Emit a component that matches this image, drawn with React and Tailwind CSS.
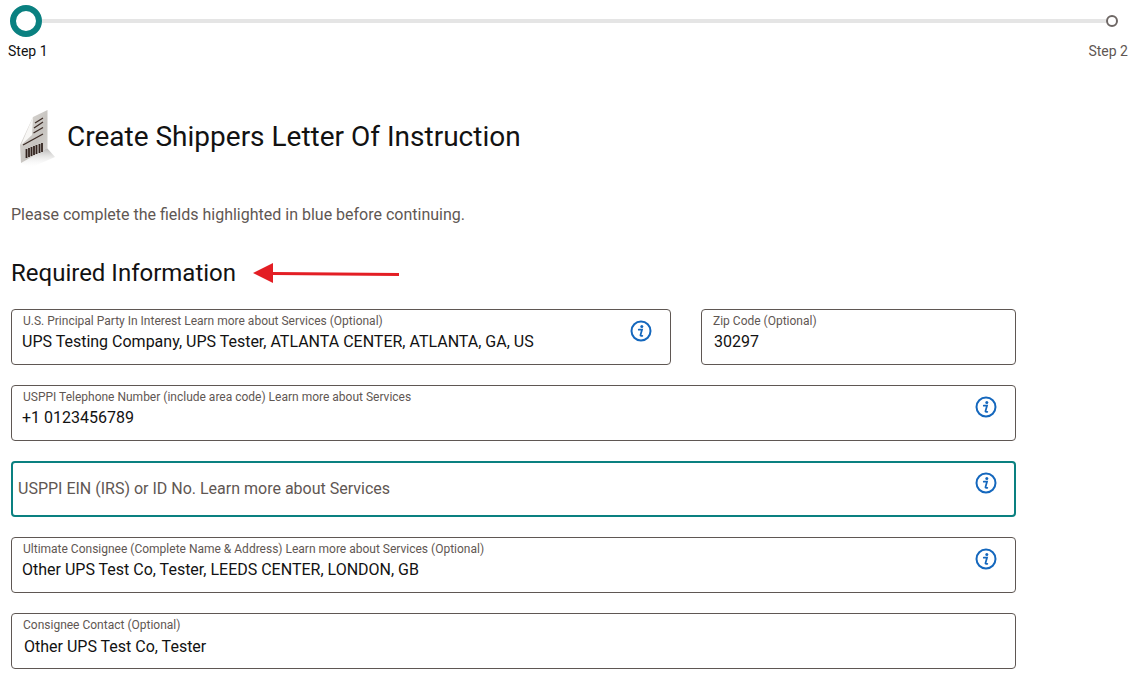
const InfoIcon = ({ className = 'right-[18px] top-[10px]' }) => (
  <svg width="22" height="22" viewBox="0 0 22 22" fill="none" className={`absolute ${className}`}>
    <circle cx="11" cy="11" r="9.5" stroke="#1467bd" strokeWidth="2" />
    <circle cx="11.800" cy="6.500" r="1.500" fill="#1467bd" />
    <path d="M8.800 9.700h3.200l-1.500 5.400c-.1.500.1.700.8.700h1" stroke="#1467bd" strokeWidth="1.800" strokeLinecap="round" />
  </svg>
);

const Field = ({ label, value, info, className = 'w-full', valueClass = 'mt-[2px] pl-[10px]' }) => (
  <div className={`relative h-14 rounded border border-[#5f5753] bg-white pt-[3px] ${className}`}>
    <div className="pl-[11px] text-xs leading-[16px] text-[#5f5753]">{label}</div>
    <div className={`text-base leading-[22px] text-[#121212] ${valueClass}`}>{value}</div>
    {info && <InfoIcon />}
  </div>
);

const DocIcon = () => (
  <svg width="40" height="64" viewBox="0 0 40 64" className="shrink-0">
    <defs>
      <linearGradient id="sheet" x1="0" y1="0" x2="1" y2="1">
        <stop offset="0" stopColor="#dfdcd8" />
        <stop offset="0.6" stopColor="#c6c3bf" />
        <stop offset="1" stopColor="#dad8d5" />
      </linearGradient>
      <linearGradient id="shade" x1="0" y1="0" x2="0" y2="1">
        <stop offset="0" stopColor="#a9a7a5" stopOpacity="0.85" />
        <stop offset="1" stopColor="#ffffff" stopOpacity="0" />
      </linearGradient>
    </defs>
    <path d="M32 40l8 9-25 11-9-5z" fill="url(#shade)" />
    <path d="M18 9L32.500 2V40L6 55 5 37z" fill="url(#sheet)" />
    <path d="M18 9l-1 18L6 37z" fill="#f8f7f5" />
    <path d="M20 15l8-5M19 20l9-6M18.500 25l9.500-5.500M8 37l20-11" stroke="#3d2c26" strokeWidth="1.300" />
    <path d="M11.500 41v9M14 40v9M16.500 39v9M19 38v9M21.500 37v9M24.500 36v9M27 35v9" stroke="#33241f" strokeWidth="1.800" />
  </svg>
);

export default function App() {
  return (
    <div className="h-[682px] overflow-hidden bg-white font-['Roboto',sans-serif]">
      {/* Stepper */}
      <div className="pl-[10px] pr-[16px] pt-[5px]">
        <div className="flex items-center">
          <div className="h-8 w-8 shrink-0 rounded-full border-[6px] border-[#0a8080] bg-white" />
          <div className="h-1 flex-1 bg-[#e5e5e5]" />
          <div className="h-3 w-3 shrink-0 rounded-full border-2 border-[#6e6765] bg-white" />
        </div>
      </div>
      <div className="mt-1 flex justify-between pl-2 pr-[6px] text-sm leading-5">
        <span className="text-[#121212]">Step 1</span>
        <span className="text-[#5f5753]">Step 2</span>
      </div>

      {/* Title */}
      <div className="mt-[47px] flex items-center gap-3 pl-[15px]">
        <DocIcon />
        <h1 className="pb-[6px] text-[28px] leading-9 text-[#121212]">Create Shippers Letter Of Instruction</h1>
      </div>

      <div className="pl-[11px]">
        <p className="mt-[31px] text-base leading-6 text-[#5f5753]">Please complete the fields highlighted in blue before continuing.</p>

        <div className="mt-[30px] flex items-center gap-[17px]">
          <h2 className="text-2xl leading-8 text-[#121212]">Required Information</h2>
          <svg width="146" height="20" viewBox="0 0 146 20" className="shrink-0">
            <path d="M146 11.500L20 10.500" stroke="#e31e24" strokeWidth="3" />
            <path d="M0 10L20 0v20z" fill="#e31e24" />
          </svg>
        </div>

        {/* Form */}
        <div className="mt-5 flex w-[1005px] flex-col gap-5">
          <div className="flex gap-[30px]">
            <Field
              className="w-[660px]"
              label="U.S. Principal Party In Interest Learn more about Services (Optional)"
              value="UPS Testing Company, UPS Tester, ATLANTA CENTER, ATLANTA, GA, US"
              info
            />
            <Field className="w-[315px]" label="Zip Code (Optional)" value="30297" valueClass="mt-[2px] pl-3" />
          </div>
          <Field label="USPPI Telephone Number (include area code) Learn more about Services" value="+1 0123456789" info />
          <div className="relative flex h-14 items-center rounded border-2 border-[#0a8080] bg-white pl-[5px] text-base text-[#5f5753]">
            USPPI EIN (IRS) or ID No. Learn more about Services
            <InfoIcon className="right-[17px] top-[9px]" />
          </div>
          <Field
            label="Ultimate Consignee (Complete Name & Address) Learn more about Services (Optional)"
            value="Other UPS Test Co, Tester, LEEDS CENTER, LONDON, GB"
            info
          />
          <Field label="Consignee Contact (Optional)" value="Other UPS Test Co, Tester" valueClass="mt-[3px] pl-3" />
        </div>
      </div>
    </div>
  );
}
